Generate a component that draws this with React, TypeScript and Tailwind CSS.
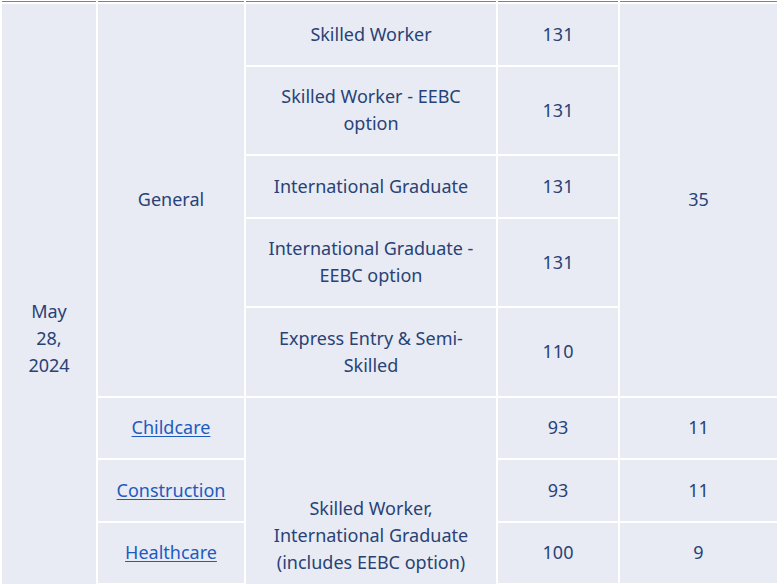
import React from "react";

const td =
  "bg-[#e8ebf3] px-5 py-[16.75px] text-center align-middle leading-[27px]";
const td2 =
  "bg-[#e8ebf3] px-2 py-[16.75px] text-center align-middle leading-[27px]";
const link = "text-[#1d5bbf] underline underline-offset-2";
const th = "h-0 border-b border-[#6f84ad] p-0";

export default function App() {
  return (
    <div className="h-[584px] w-[784px] overflow-hidden bg-white">
      <table
        className="-mt-px table-fixed border-separate border-spacing-[2px] text-[18px] text-[#284276]"
        style={{ width: 779, fontFamily: '"Noto Sans", "Open Sans", sans-serif' }}
      >
        <colgroup>
          <col style={{ width: 94 }} />
          <col style={{ width: 146 }} />
          <col style={{ width: 250 }} />
          <col style={{ width: 120 }} />
          <col style={{ width: 157 }} />
        </colgroup>
        <thead>
          <tr>
            <th className={th}></th>
            <th className={th}></th>
            <th className={th}></th>
            <th className={th}></th>
            <th className={th}></th>
          </tr>
        </thead>
        <tbody>
          <tr>
            <td className={td} rowSpan={9}>
              May 28, 2024
            </td>
            <td className={td2} rowSpan={5}>
              General
            </td>
            <td className={td}>Skilled Worker</td>
            <td className={td}>131</td>
            <td className={td} rowSpan={5}>
              35
            </td>
          </tr>
          <tr>
            <td className={td}>Skilled Worker - EEBC option</td>
            <td className={td}>131</td>
          </tr>
          <tr>
            <td className={td}>International Graduate</td>
            <td className={td}>131</td>
          </tr>
          <tr>
            <td className={td}>International Graduate - EEBC option</td>
            <td className={td}>131</td>
          </tr>
          <tr>
            <td className={td}>Express Entry &amp; Semi-Skilled</td>
            <td className={td}>110</td>
          </tr>
          <tr>
            <td className={td2}>
              <a href="#" className={link}>
                Childcare
              </a>
            </td>
            <td className={td} rowSpan={4}>
              Skilled Worker, International Graduate (includes EEBC option)
            </td>
            <td className={td}>93</td>
            <td className={td}>11</td>
          </tr>
          <tr>
            <td className={td2}>
              <a href="#" className={link}>
                Construction
              </a>
            </td>
            <td className={td}>93</td>
            <td className={td}>11</td>
          </tr>
          <tr>
            <td className={td2}>
              <a href="#" className={link}>
                Healthcare
              </a>
            </td>
            <td className={td}>100</td>
            <td className={td}>9</td>
          </tr>
          <tr>
            <td className={`${td2} h-[87.5px]`}></td>
            <td className={`${td} h-[87.5px]`}></td>
            <td className={`${td} h-[87.5px]`}></td>
          </tr>
        </tbody>
      </table>
    </div>
  );
}
